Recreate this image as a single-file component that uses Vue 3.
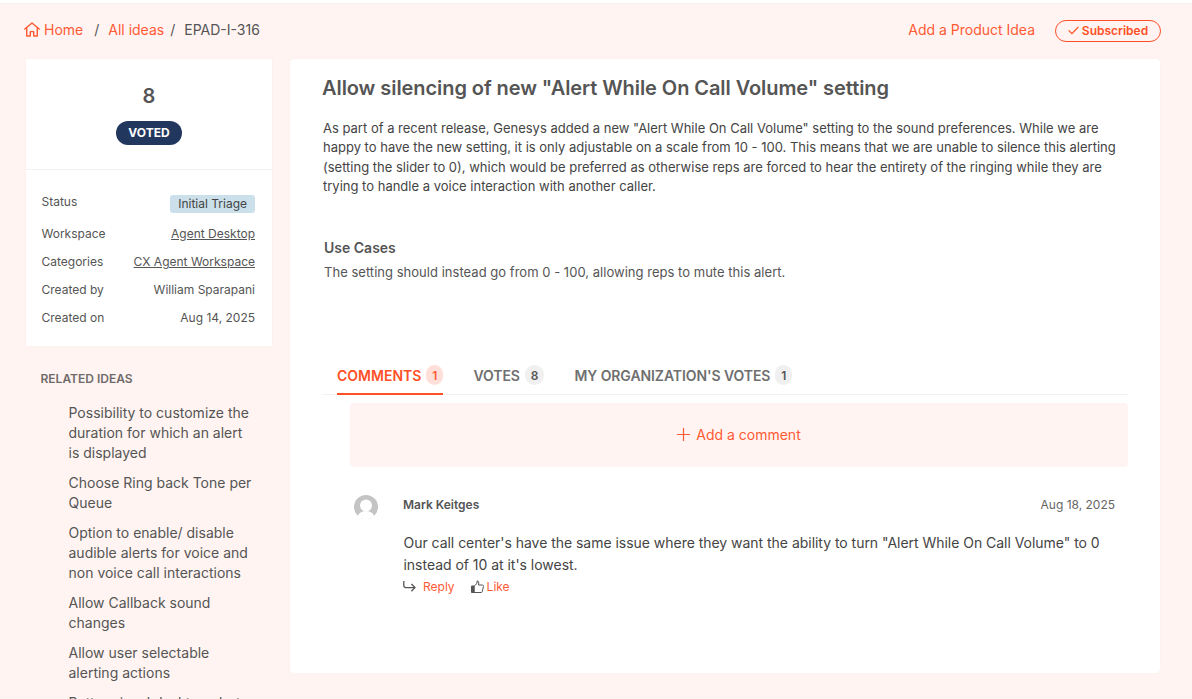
<template>
  <div class="page">
    <header class="topbar">
      <nav class="crumbs">
        <a class="link home">
          <svg class="home-icon" width="16" height="15" viewBox="0 0 16 15" fill="none" stroke="currentColor" stroke-width="1.4" stroke-linejoin="round">
            <path d="M.8 7 8 1l7.2 6" stroke-linecap="round" />
            <path d="M2.7 5.6v8.4h3.6V9.6h3.4V14h3.6V5.6" />
          </svg>
          Home
        </a>
        <span class="sep first">/</span>
        <a class="link">All ideas</a>
        <span class="sep second">/</span>
        <span class="current">EPAD-I-316</span>
      </nav>
      <div class="actions">
        <a class="link">Add a Product Idea</a>
        <button class="subscribed">
          <svg width="11" height="9" viewBox="0 0 11 9" fill="none" stroke="currentColor" stroke-width="1.2">
            <path d="M.7 4.4 3.9 7.7 10.3 1" />
          </svg>
          Subscribed
        </button>
      </div>
    </header>

    <div class="columns">
      <aside class="side">
        <section class="side-card">
          <div class="vote-box">
            <div class="vote-count">8</div>
            <span class="voted">VOTED</span>
          </div>
          <dl class="meta">
            <div v-for="row in meta" :key="row.label" class="meta-row" :class="{ 'status-row': row.badge }">
              <dt>{{ row.label }}</dt>
              <dd>
                <span v-if="row.badge" class="badge">{{ row.value }}</span>
                <a v-else-if="row.link" class="meta-link">{{ row.value }}</a>
                <template v-else>{{ row.value }}</template>
              </dd>
            </div>
          </dl>
        </section>
        <section class="related">
          <h3>RELATED IDEAS</h3>
          <ul>
            <li v-for="idea in related" :key="idea">{{ idea }}</li>
          </ul>
        </section>
      </aside>

      <main class="idea">
        <h1>Allow silencing of new "Alert While On Call Volume" setting</h1>
        <p class="desc">
          As part of a recent release, Genesys added a new "Alert While On Call Volume" setting to the sound preferences. While we are happy to have the new setting, it is only adjustable on a scale from 10 - 100. This means that we are unable to silence this alerting (setting the slider to 0), which would be preferred as otherwise reps are forced to hear the entirety of the ringing while they are trying to handle a voice interaction with another caller.
        </p>
        <h2>Use Cases</h2>
        <p class="use-case">The setting should instead go from 0 - 100, allowing reps to mute this alert.</p>

        <div class="tabs">
          <div v-for="(tab, i) in tabs" :key="tab.label" class="tab" :class="{ active: i === 0 }">
            {{ tab.label }}<span class="count">{{ tab.count }}</span>
          </div>
        </div>

        <div class="add-comment">
          <svg width="13" height="13" viewBox="0 0 13 13" stroke="currentColor" stroke-width="1.2">
            <path d="M6.5 0v13M0 6.500h13" />
          </svg>
          Add a comment
        </div>

        <article class="comment">
          <svg class="avatar" width="24" height="24" viewBox="0 0 24 24">
            <circle cx="12" cy="12" r="12" fill="#c4c4c4" />
            <circle cx="12" cy="10.5" r="6" fill="#fff" />
            <path d="M3.4 21.2c2-3.6 4.8-5.2 8.6-5.2s6.600 1.600 8.600 5.200A12 12 0 0 1 12 24a12 12 0 0 1-8.600-2.800z" fill="#fff" />
          </svg>
          <div class="comment-body">
            <div class="comment-head">
              <span class="author">Mark Keitges</span>
              <span class="date">Aug 18, 2025</span>
            </div>
            <p>Our call center's have the same issue where they want the ability to turn "Alert While On Call Volume" to 0 instead of 10 at it's lowest.</p>
            <div class="comment-actions">
              <svg class="reply-icon" width="13" height="11" viewBox="0 0 13 11" fill="none" stroke="#555" stroke-width="1.3">
                <path d="M.8 0v4.600a2 2 0 0 0 2 2h9M8.400 3l3.600 3.600-3.600 3.600" />
              </svg>
              <a class="action reply">Reply</a>
              <svg class="like-icon" width="13" height="13" viewBox="0 0 13 13" fill="none" stroke="#555" stroke-width="1">
                <path d="M.5 6h2.700v6.500H.5z" fill="#555" />
                <path d="M3.200 6 6 3.400V1c1.500-.4 2.200 1 1.500 4h4c1 0 1.200 1 .9 1.700l-1.200 5c-.2.600-.6.800-1.200.8H3.200" />
              </svg>
              <a class="action">Like</a>
            </div>
          </div>
        </article>
      </main>
    </div>
  </div>
</template>

<script setup>
const meta = [
  { label: 'Status', value: 'Initial Triage', badge: true },
  { label: 'Workspace', value: 'Agent Desktop', link: true },
  { label: 'Categories', value: 'CX Agent Workspace', link: true },
  { label: 'Created by', value: 'William Sparapani' },
  { label: 'Created on', value: 'Aug 14, 2025' }
]

const related = [
  'Possibility to customize the duration for which an alert is displayed',
  'Choose Ring back Tone per Queue',
  'Option to enable/ disable audible alerts for voice and non voice call interactions',
  'Allow Callback sound changes',
  'Allow user selectable alerting actions',
  'Better visual desktop alert'
]

const tabs = [
  { label: 'COMMENTS', count: 1 },
  { label: 'VOTES', count: 8 },
  { label: "MY ORGANIZATION'S VOTES", count: 1 }
]
</script>

<style>
html,
body {
  margin: 0;
  height: 100%;
  overflow: hidden;
  background: #fff;
}
</style>

<style scoped>
.page {
  height: 696px;
  margin-top: 3px;
  overflow: hidden;
  background: #fff4f1;
  color: #555;
  font-family: Inter, "Noto Sans", sans-serif;
  border-top: 1px solid #f3f0f0;
  box-sizing: border-box;
}

.topbar {
  display: flex;
  justify-content: space-between;
  align-items: center;
  height: 55px;
  padding: 0 31px 4px 24px;
  box-sizing: border-box;
  font-size: 14px;
}

.crumbs,
.actions,
.home {
  display: flex;
  align-items: center;
}

.link {
  color: #ff5a35;
}

.home-icon {
  margin-right: 4px;
}

.sep {
  color: #555;
}

.sep.first {
  margin: 0 9px 0 11px;
}

.sep.second {
  margin: 0 9px 0 6px;
}

.current {
  color: #555;
}

.actions {
  gap: 20px;
}

.subscribed {
  display: flex;
  align-items: center;
  justify-content: center;
  gap: 3px;
  width: 106px;
  height: 22px;
  margin-top: 2px;
  padding: 0;
  border: 1px solid #ff4f27;
  border-radius: 11px;
  background: transparent;
  color: #ff4f27;
  font: 600 12px Inter, sans-serif;
}

.columns {
  display: grid;
  grid-template-columns: 246px 870px;
  gap: 18px;
  padding-left: 26px;
  align-items: start;
}

.side-card {
  background: #fff;
  height: 287px;
  box-shadow: 0 0 1px rgba(0, 0, 0, 0.08);
}

.vote-box {
  display: flex;
  flex-direction: column;
  align-items: center;
  height: 111px;
  padding-top: 24px;
  box-sizing: border-box;
  border-bottom: 1px solid #f2f2f2;
}

.vote-count {
  font-size: 20px;
  font-weight: 600;
  line-height: 26px;
}

.voted {
  margin-top: 12px;
  padding: 0 12px;
  height: 24px;
  line-height: 24px;
  border-radius: 12px;
  background: #21375e;
  color: #fff;
  font-size: 12px;
  font-weight: 700;
}

.meta {
  margin: 0;
  padding: 21px 17px 0 15.5px;
  font-size: 12px;
}

.meta-row {
  display: flex;
  justify-content: space-between;
  height: 28px;
  line-height: 18px;
}

.meta-row.status-row {
  height: 34px;
}

.meta-row dd {
  margin: 0;
}

.status-row dt {
  margin-top: 2px;
}

.badge {
  display: block;
  height: 18px;
  margin-top: 4px;
  padding: 0 8px;
  border-radius: 3px;
  background: #cbe0ea;
  color: #444;
}

.meta-link {
  text-decoration: underline;
}

.related {
  padding: 0 0 0 14.5px;
}

.related h3 {
  margin: 25px 0 16px;
  font-size: 12px;
  line-height: 16px;
  font-weight: 600;
  color: #6f6a6a;
}

.related ul {
  margin: 0;
  padding: 0 20px 0 28px;
  list-style: none;
  font-size: 14px;
  line-height: 20px;
}

.related li {
  margin-bottom: 10px;
}

.idea {
  height: 614px;
  padding: 16px 32px 0;
  box-sizing: border-box;
  background: #fff;
  border-radius: 4px;
  box-shadow: 0 0 1px rgba(0, 0, 0, 0.08);
}

h1 {
  margin: 0;
  font-size: 20px;
  line-height: 26px;
  font-weight: 600;
  letter-spacing: -0.07px;
}

.desc {
  margin: 17.500px 0 0 1px;
  font-size: 13px;
  line-height: 19.5px;
  color: #444;
}

h2 {
  margin: 41.500px 0 0 2px;
  font-size: 14px;
  line-height: 20px;
  font-weight: 600;
}

.use-case {
  margin: 4px 0 0 2px;
  font-size: 13px;
  line-height: 20px;
  letter-spacing: 0.025px;
}

.tabs {
  display: flex;
  gap: 30px;
  margin-top: 75px;
  padding-left: 15px;
  height: 37px;
  border-bottom: 1px solid #f2f2f2;
}

.tab {
  display: flex;
  align-items: center;
  height: 38px;
  box-sizing: border-box;
  border-bottom: 2px solid transparent;
  font-size: 14px;
  font-weight: 600;
  color: #6f6f6f;
  letter-spacing: -0.08px;
}

.tab.active {
  border-bottom-color: #ff4f27;
  color: #ff4f27;
  letter-spacing: 0;
}

.count {
  display: flex;
  align-items: center;
  justify-content: center;
  height: 20px;
  margin-left: 5px;
  padding: 0 6px;
  border-radius: 10px;
  background: #f0f0f0;
  font-size: 12px;
  color: #555;
}

.active .count {
  background: #ffe0d9;
  color: #ff5a35;
}

.add-comment {
  display: flex;
  align-items: center;
  justify-content: center;
  gap: 6px;
  height: 64px;
  padding-bottom: 2px;
  box-sizing: border-box;
  margin: 8px 0 0 28px;
  width: 778px;
  border-radius: 4px;
  background: #fff4f1;
  color: #ff5a35;
  font-size: 14px;
}

.comment {
  display: flex;
  gap: 25px;
  margin: 27px 13px 0 32px;
}

.comment .avatar {
  flex: none;
  margin-top: 1px;
}

.comment-body {
  flex: 1;
}

.comment-head {
  display: flex;
  justify-content: space-between;
  align-items: center;
  height: 21px;
  margin-bottom: 1px;
}

.author {
  font-size: 12px;
  font-weight: 600;
}

.date {
  font-size: 12px;
  color: #666;
}

.comment-body p {
  margin: 17px 0 0 0.5px;
  font-size: 14px;
  line-height: 22px;
  color: #444;
  letter-spacing: -0.03px;
}

.comment-actions {
  display: flex;
  align-items: center;
  height: 20px;
  font-size: 12px;
}

.action {
  color: #ff5a35;
}

.reply {
  margin: 0 16px 0 7px;
}

.like-icon {
  margin-right: 3px;
}
</style>
